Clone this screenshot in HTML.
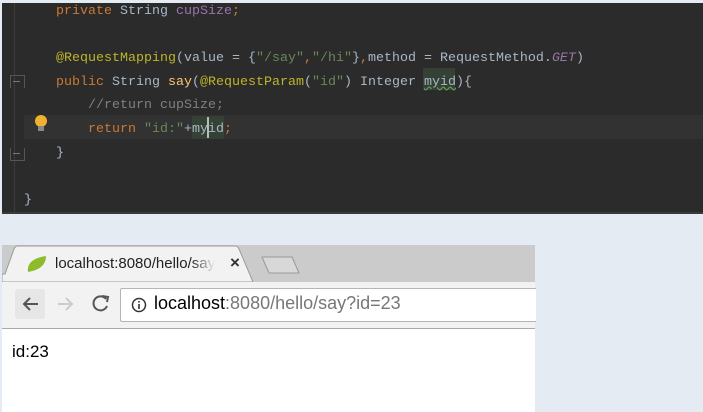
<!DOCTYPE html>
<html><head><style>
body{margin:0;width:703px;height:412px;background:#e4ebf2;position:relative;overflow:hidden;font-family:"Liberation Sans",sans-serif}
#ed{position:absolute;left:2px;top:3px;width:701px;height:211px;background:#2b2b2b;border-bottom:2px solid #3a3a3a;box-sizing:border-box;overflow:hidden}
.gl{position:absolute;left:12px;top:0;width:1px;height:211px;background:#3c3c3c}
.hl{position:absolute;left:22px;top:112px;width:679px;height:24px;background:#323232}
.code{position:absolute;left:6px;top:-3px;font-family:"Liberation Mono",monospace;font-size:13.33px;line-height:23.6px;color:#a9b7c6;white-space:pre}
.k{color:#cc7832}.s{color:#6a8759}.a{color:#bbb529}.f{color:#9876aa}.c{color:#808080}.m{color:#ffc66d}.i{color:#9876aa;font-style:italic}
#br{position:absolute;left:2px;top:245px;width:533px;height:167px;background:#fff}
.tabs{position:absolute;left:0;top:0;width:533px;height:37px;background:#cbcbcb}
.tb{position:absolute;left:0;top:37px;width:533px;height:46px;background:#f2f2f2;border-bottom:1px solid #a9a9a9}
</style></head><body>
<div id="ed">
<div class="gl"></div>
<div class="hl"></div>
<div style="position:absolute;left:8px;top:72px;width:13px;height:12px;border:1px solid #555;border-bottom:none"></div>
<div style="position:absolute;left:11px;top:78px;width:7px;height:1px;background:#777"></div>
<div style="position:absolute;left:8px;top:145px;width:13px;height:12px;border:1px solid #555;border-top:none"></div>
<div style="position:absolute;left:11px;top:150px;width:7px;height:1px;background:#777"></div>
<div style="position:absolute;left:33px;top:112px;width:12px;height:12px;border-radius:50%;background:#f0b030"></div>
<div style="position:absolute;left:36px;top:123px;width:6px;height:5px;background:#888"></div>
<div style="position:absolute;left:190px;top:113px;width:32px;height:23px;background:#344134"></div>
<div style="position:absolute;left:205px;top:114px;width:2px;height:21px;background:#bbb"></div>
<div style="position:absolute;left:421px;top:65px;width:32px;height:22px;background:#344134"></div>
<div class="code">      <span class="k">private</span> String <span class="f">cupSize</span><span class="k">;</span>

      <span class="a">@RequestMapping</span>(value = {<span class="s">"/say"</span><span class="k">,</span><span class="s">"/hi"</span>}<span class="k">,</span>method = RequestMethod.<span class="i">GET</span>)
      <span class="k">public</span> String <span class="m">say</span>(<span class="a">@RequestParam</span>(<span class="s">"id"</span>) Integer <span style="text-decoration:underline wavy #629755">myid</span>){
          <span class="c">//return cupSize;</span>
          <span class="k">return</span> <span class="s">"id:"</span>+myid<span class="k">;</span>
      }

  }</div>
</div>
<div id="br">
<div class="tabs">
<svg width="533" height="37" style="position:absolute;left:0;top:0">
<path d="M0 37 L0 29 L3 29 L12 4 Q13 1 16 1 L233 1 Q236 1 237 4 L251 37 Z" fill="#f2f2f2" stroke="#9a9a9a"/>
<path d="M260 12 L290 12 L297 28 L267 28 Z" fill="#d8d8d8" stroke="#999" stroke-linejoin="round"/>
<path d="M26 27 Q24 14 44 11 Q44 24 26 27Z" fill="#8dbb2a"/>
</svg>
<div style="position:absolute;left:53px;top:10px;font-size:15px;color:#222;width:160px;overflow:hidden;white-space:nowrap;-webkit-mask-image:linear-gradient(90deg,#000 85%,transparent);mask-image:linear-gradient(90deg,#000 85%,transparent)">localhost:8080/hello/say</div>
<div style="position:absolute;left:228px;top:8px;font-size:17px;font-weight:bold;color:#333">×</div>
</div>
<div class="tb">
<div style="position:absolute;left:13px;top:7px;width:30px;height:30px;background:#e6e6e6;border-radius:3px"></div>
<svg width="120" height="46" style="position:absolute;left:0;top:0">
<path d="M36 22 H22 M28 16 L22 22 L28 28" stroke="#555" stroke-width="2" fill="none"/>
<path d="M56 22 H70 M64 16 L70 22 L64 28" stroke="#ccc" stroke-width="2" fill="none"/>
<path d="M104 17 A7 7 0 1 0 105 24" stroke="#555" stroke-width="2" fill="none"/><path d="M100 14 L106 15 L105 20" stroke="#555" stroke-width="2" fill="none"/>
</svg>
<div style="position:absolute;left:118px;top:6px;width:415px;height:32px;background:#fff;border:1px solid #b5b5b5;border-right:none;border-radius:2px 0 0 2px"></div>
<svg width="16" height="16" style="position:absolute;left:129px;top:15px"><circle cx="8" cy="8" r="6.5" stroke="#333" stroke-width="1.5" fill="none"/><rect x="7.2" y="7" width="1.6" height="5" fill="#333"/><rect x="7.2" y="4" width="1.6" height="1.6" fill="#333"/></svg>
<div style="position:absolute;left:152px;top:11px;font-size:18px;color:#000;white-space:nowrap">localhost<span style="color:#777">:8080/hello/say?id=23</span></div>
</div>
<div style="position:absolute;left:10px;top:97px;font-size:17px;color:#000">id:23</div>
</div>
</body></html>
